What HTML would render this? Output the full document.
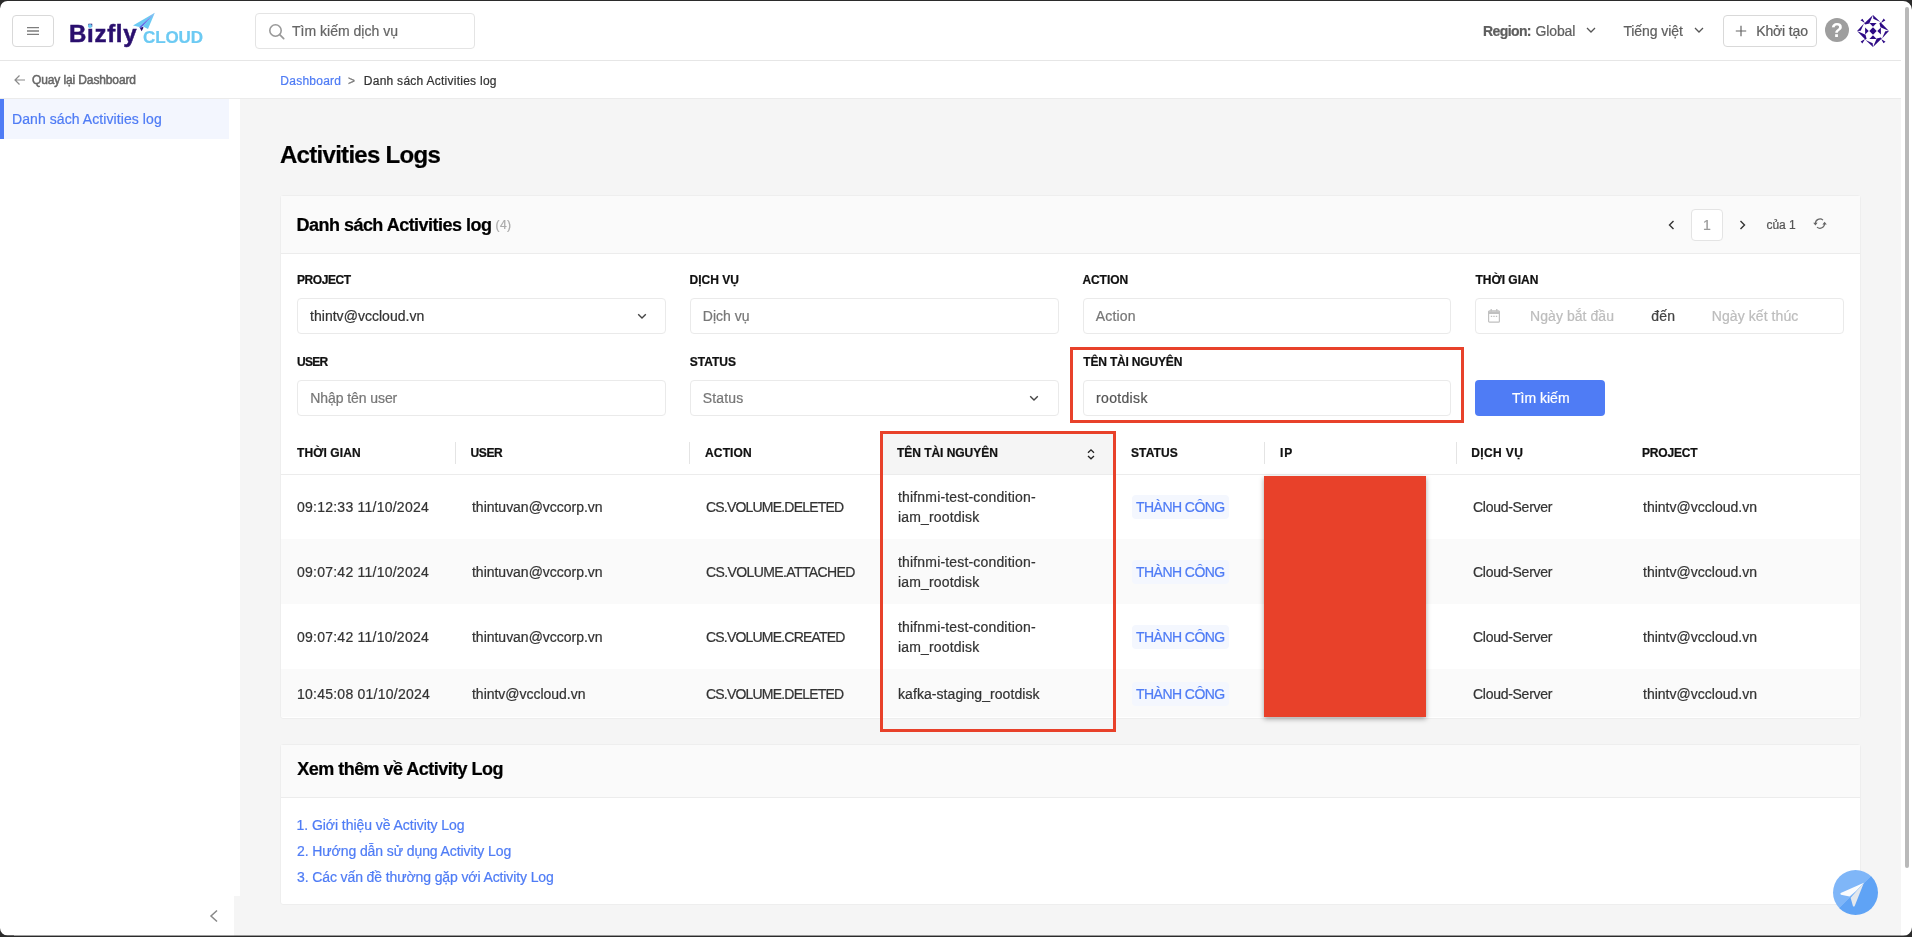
<!DOCTYPE html>
<html lang="vi">
<head>
<meta charset="utf-8">
<title>Activities Logs</title>
<style>
*{box-sizing:border-box;margin:0;padding:0}
html,body{width:1912px;height:937px;overflow:hidden;background:#f5f5f5}
body{font-family:"Liberation Sans","DejaVu Sans",sans-serif;font-size:14px;color:#333;position:relative;-webkit-text-stroke:.22px}
#app{position:absolute;left:0;top:0;width:1912px;height:937px;will-change:transform}
.abs{position:absolute}
.t{position:absolute;white-space:nowrap;line-height:20px}
#frame-top{left:0;top:0;width:1912px;height:1px;background:#2b2b2b;z-index:50}
#frame-bot{left:0;top:935px;width:1912px;height:2px;background:linear-gradient(rgba(43,43,43,.45) 0,rgba(43,43,43,.45) 50%,#2b2b2b 50%);z-index:50}
.corner{width:14px;height:14px;z-index:51}
/* header */
#hdr{left:0;top:0;width:1912px;height:61px;background:#fff;border-bottom:1px solid #e6e6e6}
#burger{left:12px;top:15px;width:42px;height:32px;border:1px solid #d9d9d9;border-radius:4px;background:#fff}
#search{left:255px;top:13px;width:220px;height:36px;border:1px solid #e4e4e4;border-radius:4px;background:#fff}
#create{left:1723px;top:15px;width:94px;height:32px;border:1px solid #d9d9d9;border-radius:4px;background:#fff}
#help{left:1825px;top:18px;width:24px;height:24px;border-radius:50%;background:#9e9e9e;color:#fff;font-weight:bold;font-size:19.500px;line-height:25px;text-align:center;-webkit-text-stroke:0}
/* sub header */
#sub{left:0;top:61px;width:1901px;height:38px;background:#fff;border-bottom:1px solid #ebebeb}
/* sidebar */
#side{left:0;top:99px;width:240px;height:797px;background:#fff}
#side-bot{left:0;top:896px;width:234px;height:41px;background:#fff}
#side-item{left:0;top:99px;width:229px;height:40px;background:#f3f6fe;border-left:4px solid #4f7cf5}
/* scroll */
#sb-track{left:1901px;top:0;width:11px;height:937px;background:#fff}
#sb-thumb{left:1905px;top:7px;width:4px;height:861px;background:#b9b9b9;border-radius:2px}
/* cards */
.card{background:#fff;border:1px solid #eeeeee;border-radius:3px}
.card-h{background:#fafafa;border-bottom:1px solid #ececec}
.lbl{font-size:12px;font-weight:bold;color:#111;letter-spacing:.5px}
.inp{border:1px solid #eaeaea;border-radius:4px;background:#fff;height:36px}
.ph{color:#777}
.blue{color:#4f7cf5}
/* table */
#tbl{left:281px;top:432px;width:1579px;border-collapse:collapse;table-layout:fixed}
#tbl th{height:42px;text-align:left;font-size:12px;font-weight:bold;color:#111;letter-spacing:.5px;padding:0 0 0 15px;position:relative;border-bottom:1px solid #ececec;background:#fff}
#tbl td{padding:0 0 0 16px;font-size:14px;color:#333;line-height:20px;vertical-align:middle}
#tbl tr.r1 td{height:65px}
#tbl tr.alt td{background:#fafafa}
#tbl tr.last td{padding-top:2px}
#tbl th:first-child{padding-left:16px}
#tbl th:nth-child(7){padding-left:14.200px}
#tbl th:nth-child(2){padding-left:14.500px}
#tbl th.dv::after{content:"";position:absolute;right:0;top:10px;width:1px;height:22px;background:#e4e4e4}
.tag{display:inline-block;background:#f4f7fe;color:#4f7cf5;border-radius:4px;padding:0 4px;height:24px;line-height:24px}
.red{border:3px solid #e8412a;z-index:20}
/*FIT-START*/
#lg-biz{letter-spacing:0.72px}
#lg-cloud{letter-spacing:-0.11px}
#s-ph{letter-spacing:0.01px}
#h-region{letter-spacing:-0.60px}
#h-global{letter-spacing:-0.15px}
#h-lang{letter-spacing:-0.08px}
#h-create{letter-spacing:-0.14px}
#b-back{letter-spacing:-0.12px}
#b-dash{letter-spacing:0.25px}
#b-cur{letter-spacing:0.26px}
#s-item{letter-spacing:0.08px}
#title{letter-spacing:-0.71px}
#c1-title{letter-spacing:-0.52px}
#c1-cnt{letter-spacing:0.45px}
#pg-of{letter-spacing:-0.10px}
#l-project{letter-spacing:-0.43px}
#l-dv{letter-spacing:0.02px}
#l-action{letter-spacing:-0.05px}
#v-action{letter-spacing:0.17px}
#th6{letter-spacing:0.99px}
#l-time{letter-spacing:-0.01px}
#l-user{letter-spacing:-0.72px}
#l-status{letter-spacing:0.00px}
#l-res{letter-spacing:-0.18px}
#v-project{letter-spacing:0.03px}
#v-dv{letter-spacing:-0.00px}
#v-from{letter-spacing:0.05px}
#v-to{letter-spacing:0.28px}
#v-end{letter-spacing:0.07px}
#v-user{letter-spacing:-0.08px}
#v-status{letter-spacing:0.16px}
#v-res{letter-spacing:0.34px}
#v-btn{letter-spacing:-0.00px}
#th1{letter-spacing:0.09px}
#th2{letter-spacing:-0.38px}
#th3{letter-spacing:0.15px}
#th4{letter-spacing:-0.04px}
#th5{letter-spacing:0.11px}
#th7{letter-spacing:0.40px}
#th8{letter-spacing:-0.18px}
.c1{letter-spacing:0.24px}
.c2{letter-spacing:-0.02px}
.c3{letter-spacing:-0.80px}
.c3b{letter-spacing:-0.61px}
.c4{letter-spacing:0.17px}
.c4b{letter-spacing:0.07px}
.c5{letter-spacing:-0.54px}
.c7{letter-spacing:-0.28px}
.c8{letter-spacing:0.01px}
#c2-title{letter-spacing:-0.53px}
#k1{letter-spacing:-0.05px}
#k2{letter-spacing:-0.09px}
#k3{letter-spacing:-0.11px}
/*FIT-END*/
</style>
</head>
<body>
<div id="app">
<!-- HEADER -->
<div id="hdr" class="abs"></div>
<div id="burger" class="abs">
  <svg class="abs" style="left:13px;top:10px" width="14" height="11" viewBox="0 0 14 11"><path d="M1 1.600h12M1 5h12M1 8.400h12" stroke="#7d7d7d" stroke-width="1.300" fill="none"/></svg>
</div>
<!-- logo -->
<span class="t" id="lg-biz" style="left:69px;top:19.400px;font-size:24px;line-height:30px;font-weight:bold;color:#2a0f6e;-webkit-text-stroke:.5px #2a0f6e">Bizfly</span>
<span class="t" id="lg-cloud" style="left:143px;top:27.700px;font-size:17px;line-height:20px;color:#6ccaf3;font-weight:bold">CLOUD</span>
<div class="abs" style="left:87.600px;top:23.500px;width:4.600px;height:4.600px;border-radius:50%;background:#6ccaf3"></div>
<svg class="abs" style="left:130px;top:10px" width="28" height="24" viewBox="130 10 28 24"><path d="M154.800 12.800L133 25.400 139.300 27z" fill="#6ccaf3"/><path d="M154.800 12.800L142.600 26.300 148 29z" fill="#6ccaf3"/><path d="M154.800 12.800L139.300 27 140.300 28.500 142.600 26.300z" fill="#5a68e6"/><path d="M139.500 27.300L141.600 31.200 143.600 27.600 142 26.800 140.800 28.300z" fill="#2a0f6e"/></svg>
<div id="search" class="abs">
  <svg class="abs" style="left:12px;top:9px" width="18" height="18" viewBox="0 0 18 18"><circle cx="7.500" cy="7.500" r="5.700" stroke="#999" stroke-width="1.600" fill="none"/><path d="M11.700 11.700l4 4" stroke="#999" stroke-width="1.700" stroke-linecap="round"/></svg>
  <span class="t" id="s-ph" style="left:36px;top:7px;color:#666">Tìm kiếm dịch vụ</span>
</div>
<span class="t" id="h-region" style="left:1483px;top:21px;color:#5e5e5e;font-weight:bold">Region:</span>
<span class="t" id="h-global" style="left:1535.6px;top:21px;color:#606060">Global</span>
<svg class="abs" style="left:1586px;top:27px" width="10" height="7" viewBox="0 0 10 7"><path d="M1 1l4 4 4-4" stroke="#555" stroke-width="1.3" fill="none"/></svg>
<span class="t" id="h-lang" style="left:1623.4px;top:21px;color:#606060">Tiếng việt</span>
<svg class="abs" style="left:1694px;top:27px" width="10" height="7" viewBox="0 0 10 7"><path d="M1 1l4 4 4-4" stroke="#555" stroke-width="1.3" fill="none"/></svg>
<div id="create" class="abs">
  <svg class="abs" style="left:11px;top:9px" width="12" height="12" viewBox="0 0 12 12"><path d="M6 .8v10.400M.8 6h10.400" stroke="#666" stroke-width="1.200"/></svg>
  <span class="t" id="h-create" style="left:32.2px;top:5px;color:#606060">Khởi tạo</span>
</div>
<div id="help" class="abs">?</div>
<svg id="avatar" class="abs" style="left:1857px;top:15px" width="32" height="32" viewBox="0 0 32 32">
  <g fill="#2d0a85">
    <g><path d="M16 0L7.200 8.500 8.200 9.600 12.300 8.500z"/>
    <path d="M16 .1L16.300 3.700 23.400 7z"/>
    <path d="M12.400 8.100h7.200L16 11.700z"/>
    <path d="M3.500 5.300L5.500 3.700 7.900 8.100z"/></g>
    <g transform="rotate(90 16 16)"><path d="M16 0L7.200 8.500 8.200 9.600 12.300 8.500z"/>
    <path d="M16 .1L16.300 3.700 23.400 7z"/>
    <path d="M12.400 8.100h7.200L16 11.700z"/>
    <path d="M3.500 5.300L5.500 3.700 7.900 8.100z"/></g>
    <g transform="rotate(180 16 16)"><path d="M16 0L7.200 8.500 8.200 9.600 12.300 8.500z"/>
    <path d="M16 .1L16.300 3.700 23.400 7z"/>
    <path d="M12.400 8.100h7.200L16 11.700z"/>
    <path d="M3.500 5.300L5.500 3.700 7.900 8.100z"/></g>
    <g transform="rotate(270 16 16)"><path d="M16 0L7.200 8.500 8.200 9.600 12.300 8.500z"/>
    <path d="M16 .1L16.300 3.700 23.400 7z"/>
    <path d="M12.400 8.100h7.200L16 11.700z"/>
    <path d="M3.500 5.300L5.500 3.700 7.900 8.100z"/></g>
    <path d="M16 12.300L19.700 16 16 19.700 12.300 16z"/>
  </g>
</svg>

<!-- SUB HEADER -->
<div id="sub" class="abs"></div>
<svg class="abs" style="left:14px;top:74px" width="12" height="12" viewBox="0 0 12 12"><path d="M11 6H1.500M5.500 1.500L1 6l4.500 4.500" stroke="#8a8a8a" stroke-width="1.2" fill="none"/></svg>
<span class="t" id="b-back" style="left:32px;top:70px;font-size:12px;color:#666;-webkit-text-stroke:.5px #666">Quay lại Dashboard</span>
<span class="t blue" id="b-dash" style="left:280.3px;top:71px;font-size:12px">Dashboard</span>
<span class="t" id="b-gt" style="left:348px;top:71px;font-size:12px;color:#777">&gt;</span>
<span class="t" id="b-cur" style="left:363.8px;top:71px;font-size:12px;color:#333">Danh sách Activities log</span>

<!-- SIDEBAR -->
<div id="side" class="abs"></div>
<div id="side-bot" class="abs"></div>
<div id="side-item" class="abs"></div>
<span class="t blue" id="s-item" style="left:12.0px;top:109px">Danh sách Activities log</span>
<svg class="abs" style="left:209px;top:909px" width="10" height="14" viewBox="0 0 10 14"><path d="M8 1.500L2 7l6 5.500" stroke="#888" stroke-width="1.5" fill="none"/></svg>

<!-- TITLE -->
<span class="t" id="title" style="left:280px;top:139px;font-size:24px;line-height:32px;font-weight:bold;color:#000">Activities Logs</span>

<!-- CARD 1 -->
<div class="abs card" style="left:280px;top:195px;width:1581px;height:524px"></div>
<div class="abs card-h" style="left:281px;top:196px;width:1579px;height:58px"></div>
<span class="t" id="c1-title" style="left:296.5px;top:212px;font-size:18px;line-height:26px;font-weight:bold;color:#000">Danh sách Activities log</span>
<span class="t" id="c1-cnt" style="left:495.5px;top:215px;font-size:12px;color:#aaa">(4)</span>
<!-- pager -->
<svg class="abs" style="left:1667.700px;top:220px" width="7" height="10" viewBox="0 0 7 10"><path d="M5.500 1L1.500 5l4 4" stroke="#333" stroke-width="1.4" fill="none"/></svg>
<div class="abs" style="left:1691px;top:209px;width:32px;height:32px;border:1px solid #e4e4e4;border-radius:4px;background:#fff"></div>
<span class="t" id="pg-1" style="left:1703px;top:215px;color:#999">1</span>
<svg class="abs" style="left:1739.300px;top:220px" width="7" height="10" viewBox="0 0 7 10"><path d="M1.500 1l4 4-4 4" stroke="#333" stroke-width="1.4" fill="none"/></svg>
<span class="t" id="pg-of" style="left:1766.6px;top:215px;font-size:12px;color:#555">của 1</span>
<svg class="abs" style="left:1813px;top:218.300px" width="14" height="12" viewBox="0 0 14 12"><path d="M2.400 5.600A4.600 4.600 0 0 1 10 2.100M11.600 5.600A4.600 4.600 0 0 1 4 9.100" stroke="#666" stroke-width="1.200" fill="none"/><path d="M.2 4.800h4.400L2.400 7.500zM9.400 6.400h4.400L11.600 3.700z" fill="#666"/></svg>

<!-- filters row 1 -->
<span class="t lbl" id="l-project" style="left:297px;top:270px">PROJECT</span>
<div class="abs inp" style="left:297px;top:298px;width:369px"></div>
<span class="t" id="v-project" style="left:310px;top:306px;color:#333">thintv@vccloud.vn</span>
<svg class="abs" style="left:637px;top:313px" width="10" height="7" viewBox="0 0 10 7"><path d="M1.200 1.200l3.800 3.700 3.800-3.700" stroke="#444" stroke-width="1.400" fill="none"/></svg>

<span class="t lbl" id="l-dv" style="left:689.5px;top:270px">DỊCH VỤ</span>
<div class="abs inp" style="left:690px;top:298px;width:369px"></div>
<span class="t ph" id="v-dv" style="left:702.8px;top:306px">Dịch vụ</span>

<span class="t lbl" id="l-action" style="left:1082.4px;top:270px">ACTION</span>
<div class="abs inp" style="left:1083px;top:298px;width:368px"></div>
<span class="t ph" id="v-action" style="left:1095.8px;top:306px">Action</span>

<span class="t lbl" id="l-time" style="left:1475.5px;top:270px">THỜI GIAN</span>
<div class="abs inp" style="left:1475px;top:298px;width:369px"></div>
<svg class="abs" style="left:1488px;top:309px" width="13" height="14" viewBox="0 0 13 14"><rect x=".6" y="1.800" width="10.800" height="11.400" rx="1" stroke="#c0c0c0" stroke-width="1.200" fill="none"/><path d="M.6 3.700h10.800" stroke="#c0c0c0" stroke-width="2.600"/><path d="M3.200 0v2.500M8.800 0v2.500" stroke="#c0c0c0" stroke-width="1.300"/><path d="M2.800 7.400h1.400M5.300 7.400h1.400M7.800 7.400h1.400" stroke="#c0c0c0" stroke-width="1.300"/></svg>
<span class="t" id="v-from" style="left:1530.1px;top:306px;color:#bdbdbd">Ngày bắt đầu</span>
<span class="t" id="v-to" style="left:1651.2px;top:306px;color:#444">đến</span>
<span class="t" id="v-end" style="left:1711.8px;top:306px;color:#bdbdbd">Ngày kết thúc</span>

<!-- filters row 2 -->
<span class="t lbl" id="l-user" style="left:297px;top:352px">USER</span>
<div class="abs inp" style="left:297px;top:380px;width:369px"></div>
<span class="t ph" id="v-user" style="left:310.3px;top:388px">Nhập tên user</span>

<span class="t lbl" id="l-status" style="left:689.7px;top:352px">STATUS</span>
<div class="abs inp" style="left:690px;top:380px;width:369px"></div>
<span class="t ph" id="v-status" style="left:702.7px;top:388px">Status</span>
<svg class="abs" style="left:1029px;top:395px" width="10" height="7" viewBox="0 0 10 7"><path d="M1.200 1.200l3.800 3.700 3.800-3.700" stroke="#444" stroke-width="1.400" fill="none"/></svg>

<span class="t lbl" id="l-res" style="left:1083.3px;top:352px">TÊN TÀI NGUYÊN</span>
<div class="abs inp" style="left:1083px;top:380px;width:368px"></div>
<span class="t" id="v-res" style="left:1096.0px;top:388px;color:#555">rootdisk</span>

<div class="abs" style="left:1475px;top:380px;width:130px;height:36px;background:#4f7cf5;border-radius:4px"></div>
<span class="t" id="v-btn" style="left:1512px;top:388px;color:#fff">Tìm kiếm</span>

<!-- TABLE -->
<table id="tbl" class="abs">
<colgroup><col style="width:175px"><col style="width:234px"><col style="width:192px"><col style="width:234px"><col style="width:149px"><col style="width:192px"><col style="width:170px"><col style="width:233px"></colgroup>
<thead><tr>
<th class="dv"><span id="th1">THỜI GIAN</span></th><th class="dv"><span id="th2">USER</span></th><th><span id="th3">ACTION</span></th><th style="background:#f5f5f5"><span id="th4">TÊN TÀI NGUYÊN</span>
<svg class="abs" style="right:21px;top:16px" width="8" height="14" viewBox="0 0 8 14"><path d="M1 4.800l3-3 3 3M1 8l3 2.800 3-2.800" stroke="#222" stroke-width="1.300" fill="none"/></svg></th><th class="dv"><span id="th5">STATUS</span></th><th class="dv"><span id="th6">IP</span></th><th><span id="th7">DỊCH VỤ</span></th><th><span id="th8">PROJECT</span></th>
</tr></thead>
<tbody>
<tr class="r1"><td><span class="c1">09:12:33 11/10/2024</span></td><td><span class="c2">thintuvan@vccorp.vn</span></td><td><span class="c3">CS.VOLUME.DELETED</span></td><td><span class="c4">thifnmi-test-condition-<br>iam_rootdisk</span></td><td><span class="tag c5">THÀNH CÔNG</span></td><td></td><td><span class="c7">Cloud-Server</span></td><td><span class="c8">thintv@vccloud.vn</span></td></tr>
<tr class="r1 alt"><td><span class="c1">09:07:42 11/10/2024</span></td><td><span class="c2">thintuvan@vccorp.vn</span></td><td><span class="c3b">CS.VOLUME.ATTACHED</span></td><td><span class="c4">thifnmi-test-condition-<br>iam_rootdisk</span></td><td><span class="tag c5">THÀNH CÔNG</span></td><td></td><td><span class="c7">Cloud-Server</span></td><td><span class="c8">thintv@vccloud.vn</span></td></tr>
<tr class="r1"><td><span class="c1">09:07:42 11/10/2024</span></td><td><span class="c2">thintuvan@vccorp.vn</span></td><td><span class="c3">CS.VOLUME.CREATED</span></td><td><span class="c4">thifnmi-test-condition-<br>iam_rootdisk</span></td><td><span class="tag c5">THÀNH CÔNG</span></td><td></td><td><span class="c7">Cloud-Server</span></td><td><span class="c8">thintv@vccloud.vn</span></td></tr>
<tr class="alt last"><td style="height:48px"><span class="c1">10:45:08 01/10/2024</span></td><td><span class="c2">thintv@vccloud.vn</span></td><td><span class="c3">CS.VOLUME.DELETED</span></td><td><span class="c4b">kafka-staging_rootdisk</span></td><td><span class="tag c5">THÀNH CÔNG</span></td><td></td><td><span class="c7">Cloud-Server</span></td><td><span class="c8">thintv@vccloud.vn</span></td></tr>
</tbody>
</table>

<!-- red annotations -->
<div class="abs red" style="left:1070px;top:347px;width:394px;height:76px"></div>
<div class="abs red" style="left:880px;top:431px;width:236px;height:301px"></div>
<div class="abs" style="left:1263.500px;top:475.500px;width:162px;height:241px;background:#e8412a;box-shadow:0 2px 5px rgba(0,0,0,.35);z-index:21"></div>

<!-- CARD 2 -->
<div class="abs card" style="left:280px;top:744px;width:1581px;height:161px"></div>
<div class="abs card-h" style="left:281px;top:745px;width:1579px;height:53px"></div>
<span class="t" id="c2-title" style="left:297.3px;top:756px;font-size:18px;line-height:26px;font-weight:bold;color:#000">Xem thêm về Activity Log</span>
<span class="t blue" id="k1" style="left:296.5px;top:815px">1. Giới thiệu về Activity Log</span>
<span class="t blue" id="k2" style="left:297px;top:841px">2. Hướng dẫn sử dụng Activity Log</span>
<span class="t blue" id="k3" style="left:297px;top:867px">3. Các vấn đề thường gặp với Activity Log</span>

<!-- floating button -->
<div class="abs" style="left:1833px;top:870px;width:45px;height:45px;border-radius:50%;background:linear-gradient(135deg,#7fb6f8 0,#7fb6f8 50%,#5fa3f5 50%,#5fa3f5 100%);z-index:30"></div>
<svg class="abs" style="left:1833px;top:870px;z-index:31" width="45" height="45" viewBox="0 0 45 45"><path d="M30.900 12.800L7.700 23.100Q6.900 24.200 8 24.700L16.600 26.500 23 21z" fill="#fbfcfd"/><path d="M30.900 12.800L17.600 27.800 20 36.200Q20.900 37.100 21.700 36z" fill="#e3e8ed"/></svg>

<!-- scrollbar + frame -->
<div id="sb-track" class="abs"></div>
<div id="sb-thumb" class="abs"></div>
<div id="frame-top" class="abs"></div>
<div id="frame-bot" class="abs"></div>
<svg class="abs corner" style="left:0;top:0"><path d="M0 0h14v1H8A7.500 7.500 0 0 0 0 8.500z" fill="#2b2b2b"/></svg>
<svg class="abs corner" style="left:1898px;top:0"><path d="M14 0H0v1h4a9 9 0 0 1 10 9z" fill="#2b2b2b"/></svg>
<svg class="abs corner" style="left:0;top:923px"><path d="M0 14h14v-1.500H8A7.500 7.500 0 0 1 0 5z" fill="#2b2b2b"/></svg>
<svg class="abs corner" style="left:1898px;top:923px"><path d="M14 14H0v-1h4a9 9 0 0 0 10-9z" fill="#2b2b2b"/></svg>
</div>
</body>
</html>
